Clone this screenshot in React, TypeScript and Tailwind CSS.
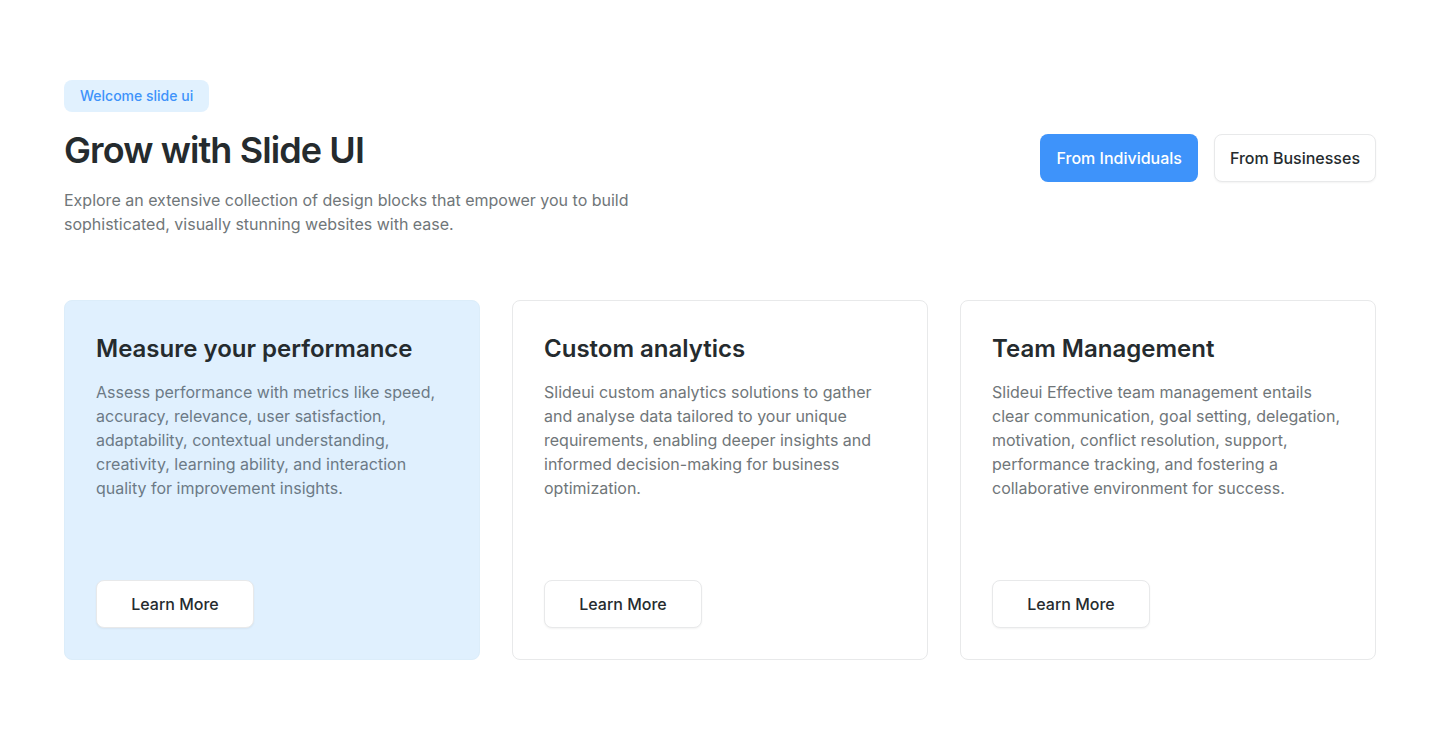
import React from "react";

type Card = { title: string; body: string; highlighted?: boolean };

const cards: Card[] = [
  {
    title: "Measure your performance",
    body: "Assess performance with metrics like speed, accuracy, relevance, user satisfaction, adaptability, contextual understanding, creativity, learning ability, and interaction quality for improvement insights.",
    highlighted: true,
  },
  {
    title: "Custom analytics",
    body: "Slideui custom analytics solutions to gather and analyse data tailored to your unique requirements, enabling deeper insights and informed decision-making for business optimization.",
  },
  {
    title: "Team Management",
    body: "Slideui Effective team management entails clear communication, goal setting, delegation, motivation, conflict resolution, support, performance tracking, and fostering a collaborative environment for success.",
  },
];

function FeatureCard({ title, body, highlighted }: Card) {
  return (
    <article
      className={
        highlighted
          ? "flex flex-col items-start rounded-lg border border-[#dcedfa] bg-[#e0f0fe] p-[31px]"
          : "flex flex-col items-start rounded-lg border border-[#e8e9ea] bg-white p-[31px]"
      }
    >
      <h2 className="text-2xl leading-[34px] font-semibold text-[#252b2e]">{title}</h2>
      <p
        className={
          highlighted
            ? "mt-[14px] mb-20 text-base leading-6 text-[#6c7a86]"
            : "mt-[14px] mb-20 text-base leading-6 text-[#707679]"
        }
      >
        {body}
      </p>
      <button
        type="button"
        className="mt-auto h-12 w-[158px] rounded-lg border border-[#e8e9ea] bg-white text-base font-medium text-[#252b2e] shadow-xs"
      >
        Learn More
      </button>
    </article>
  );
}

export default function App() {
  return (
    <main className="min-h-screen bg-white px-16 py-20 font-['Inter',sans-serif] antialiased">
      <header className="flex items-start justify-between gap-8">
        <div className="max-w-[600px]">
          <span className="inline-flex h-8 items-center rounded-lg bg-[#e1f1fe] px-4 text-sm font-medium text-[#3e93fa]">
            Welcome slide ui
          </span>
          <h1 className="mt-4 text-4xl leading-[44px] font-semibold tracking-tight text-[#252b2e]">
            Grow with Slide UI
          </h1>
          <p className="mt-4 text-base leading-6 text-[#707679]">
            Explore an extensive collection of design blocks that empower you to build sophisticated, visually
            stunning websites with ease.
          </p>
        </div>
        <div className="flex shrink-0 gap-4 self-center">
          <button type="button" className="h-12 rounded-lg bg-[#3e93fa] px-4 text-base font-medium text-white">
            From Individuals
          </button>
          <button
            type="button"
            className="h-12 rounded-lg border border-[#e8e9ea] bg-white px-[15px] text-base font-medium text-[#252b2e] shadow-xs"
          >
            From Businesses
          </button>
        </div>
      </header>
      <section className="mt-16 grid gap-8 md:grid-cols-3">
        {cards.map((card) => (
          <FeatureCard key={card.title} {...card} />
        ))}
      </section>
    </main>
  );
}
